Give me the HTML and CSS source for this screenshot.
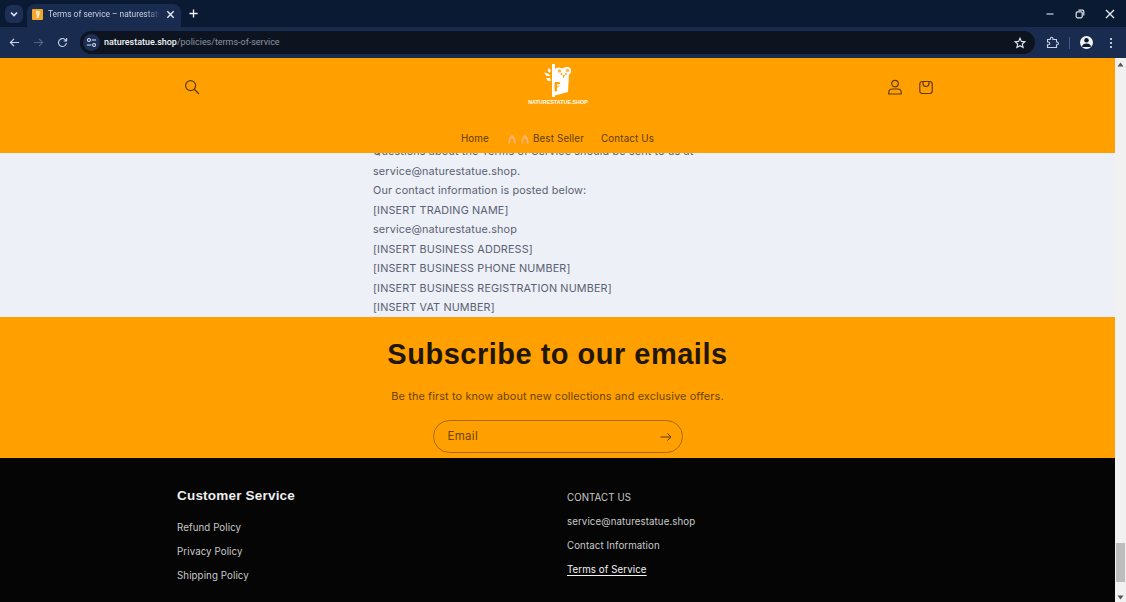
FILE: index.html
```html
<!DOCTYPE html>
<html lang="en">
<head>
<meta charset="utf-8">
<title>Terms of service – naturestatue.shop</title>
<link rel="stylesheet" href="styles.css">
</head>
<body>
<div class="browser">
  <div class="tabbar">
    <div class="tab-menu"><svg width="10" height="10" viewBox="0 0 10 10"><path d="M2 3.500 5 6.500 8 3.500" fill="none" stroke="#dfe6f5" stroke-width="1.600"/></svg></div>
    <div class="tab">
      <svg class="favicon" width="11" height="11" viewBox="0 0 11 11"><rect width="11" height="11" rx="1" fill="#f4a72c"/><path d="M4 2H7.500V5.500L6.500 9H4.500L5 5.500H4Z" fill="#ffe9b8"/></svg>
      <span class="tab-title">Terms of service – naturestatue.shop</span>
      <svg class="tab-close" width="9" height="9" viewBox="0 0 10 10"><path d="M1.500 1.500 8.500 8.500M8.500 1.500 1.500 8.500" stroke="#e8edf7" stroke-width="1.500"/></svg>
    </div>
    <svg class="new-tab" width="9" height="9" viewBox="0 0 10 10"><path d="M5 .5V9.500M.5 5H9.500" stroke="#eef2fa" stroke-width="1.500"/></svg>
    <div class="win-controls">
      <svg width="10" height="10" viewBox="0 0 10 10"><path d="M1.500 5H8.500" stroke="#dfe4ee" stroke-width="1.100"/></svg>
      <svg width="10" height="10" viewBox="0 0 10 10"><rect x="1.200" y="2.800" width="6" height="6" rx="1.200" fill="none" stroke="#dfe4ee" stroke-width="1.200"/><path d="M3.400 1.200H7.600A1.200 1.200 0 0 1 8.800 2.400V6.600" fill="none" stroke="#dfe4ee" stroke-width="1.200"/></svg>
      <svg width="10" height="10" viewBox="0 0 10 10"><path d="M1 1 9 9M9 1 1 9" stroke="#e8ecf4" stroke-width="1.300"/></svg>
    </div>
  </div>
  <div class="toolbar">
    <svg class="nav-icon" width="11" height="11" viewBox="0 0 12 12"><path d="M11 6H1.500M5.500 2 1.500 6 5.500 10" fill="none" stroke="#c9d3e8" stroke-width="1.300"/></svg>
    <svg class="nav-icon" width="11" height="11" viewBox="0 0 12 12"><path d="M1 6H10.500M6.500 2 10.500 6 6.500 10" fill="none" stroke="#56627c" stroke-width="1.300"/></svg>
    <svg class="nav-icon" width="11" height="11" viewBox="0 0 12 12"><path d="M10.200 6.500A4.300 4.300 0 1 1 8.900 2.900L10.500 4.400M10.500 1.200V4.400H7.300" fill="none" stroke="#c9d3e8" stroke-width="1.200"/></svg>
    <div class="omnibox">
      <span class="site-chip"><svg width="11" height="11" viewBox="0 0 12 12"><circle cx="3.200" cy="3.300" r="1.600" fill="none" stroke="#dfe6f5" stroke-width="1.100"/><path d="M6.200 3.300H11M1 8.700H5.800" stroke="#dfe6f5" stroke-width="1.100"/><circle cx="8.800" cy="8.700" r="1.600" fill="none" stroke="#dfe6f5" stroke-width="1.100"/></svg></span>
      <span class="url"><span class="url-host">naturestatue.shop</span>/policies/terms-of-service</span>
      <svg class="star" width="12" height="12" viewBox="0 0 12 12"><path d="M6 1.200 7.400 4.400 10.900 4.700 8.300 7 9.100 10.500 6 8.700 2.900 10.500 3.700 7 1.100 4.700 4.600 4.400Z" fill="none" stroke="#e6ebf5" stroke-width="1.100"/></svg>
    </div>
    <svg class="ext" width="13" height="13" viewBox="0 0 13 13"><path d="M1.500 3.500H4.300V2.600A1.300 1.300 0 0 1 6.900 2.600V3.500H10.500V6H11A1.400 1.400 0 0 1 11 8.800H10.500V11.500H1.500V8.800H2.400A1.400 1.400 0 0 0 2.400 6H1.500Z" fill="none" stroke="#c9d3e8" stroke-width="1.100"/></svg>
    <span class="tool-sep"></span>
    <span class="avatar"><svg width="11" height="11" viewBox="0 0 12 12"><circle cx="6" cy="3.600" r="2.500" fill="#0d1a36"/><path d="M1.200 11A4.800 3.900 0 0 1 10.800 11Z" fill="#0d1a36"/></svg></span>
    <svg class="kebab" width="4" height="12" viewBox="0 0 4 12"><circle cx="2" cy="2" r="1.100" fill="#dfe6f5"/><circle cx="2" cy="6" r="1.100" fill="#dfe6f5"/><circle cx="2" cy="10" r="1.100" fill="#dfe6f5"/></svg>
  </div>
</div>
<div class="viewport">
  <div class="page">
    <header class="site-header">
      <div class="header-top">
        <svg class="icon-search" width="16" height="16" viewBox="0 0 16 16"><circle cx="6.600" cy="6.600" r="5" fill="none" stroke="#5c3d05" stroke-width="1.200"/><path d="M10.300 10.300 15 15" stroke="#5c3d05" stroke-width="1.300"/></svg>
        <div class="logo">
          <svg width="28" height="33" viewBox="0 0 28 33">
            <path d="M8 0H11V5C12 4.500 13 3.500 14.500 3.500C16.500 3.500 17 4.500 18 4.500C19 4.500 20 3 23 3C26 3 27.500 5 27 7.500C26.800 9 26 10 25 10.500L24 28 11 31.500V33H8Z" fill="#fff"/>
            <circle cx="15.500" cy="7" r="1.800" fill="#ffb84d"/>
            <circle cx="23.500" cy="6.500" r="1.800" fill="#ffb84d"/>
            <circle cx="17.500" cy="10" r=".9" fill="#ff9f00"/>
            <circle cx="22" cy="10" r=".9" fill="#ff9f00"/>
            <path d="M18.700 11H20.800L19.700 14.500Z" fill="#ff9f00"/>
            <path d="M11 18.500H15C16 18.500 16 20 15 20H12.500V27H11ZM12 23.500 15.500 22" stroke="#ff9f00" stroke-width=".9" fill="#ff9f00"/>
            <path d="M5 4 7 6.500 5.500 9 3.500 6.500ZM0 8.500 4 9.500 6.500 12 2.500 12ZM2 14 6 14 7 17 4 17Z" fill="#fff"/>
          </svg>
          <span class="logo-text">NATURESTATUE.SHOP</span>
        </div>
        <div class="header-icons">
          <svg width="16" height="16" viewBox="0 0 16 16"><circle cx="8" cy="4.600" r="3.300" fill="none" stroke="#5c3d05" stroke-width="1.200"/><path d="M1.800 15V13.200C1.800 11 3.500 10 5.500 10H10.500C12.500 10 14.200 11 14.200 13.200V15Z" fill="none" stroke="#5c3d05" stroke-width="1.200"/></svg>
          <svg width="16" height="16" viewBox="0 0 16 16"><rect x="1.800" y="2.500" width="12.400" height="12" rx="2.500" fill="none" stroke="#5c3d05" stroke-width="1.200"/><path d="M5 2.500V4.500A3 3 0 0 0 11 4.500V2.500" fill="none" stroke="#5c3d05" stroke-width="1.200"/></svg>
        </div>
      </div>
      <nav class="header-nav">
        <a class="nav-link">Home</a>
        <a class="nav-link nav-best">
          <svg class="flame" width="8" height="10" viewBox="0 0 9 11"><path d="M4.500 .5C6.800 3 8.500 5.500 8.500 8V10.500H6.500V8C6.500 6.500 5.500 5 4.500 4.500C3.500 5 2.500 6.500 2.500 8V10.500H.5V8C.5 5.500 2.200 3 4.500 .5Z" fill="#ffb27a"/></svg>
          <svg class="flame" width="8" height="10" viewBox="0 0 9 11"><path d="M4.500 .5C6.800 3 8.500 5.500 8.500 8V10.500H6.500V8C6.500 6.500 5.500 5 4.500 4.500C3.500 5 2.500 6.500 2.500 8V10.500H.5V8C.5 5.500 2.200 3 4.500 .5Z" fill="#ffb27a"/></svg>
          <span class="nav-best-label">Best Seller</span>
        </a>
        <a class="nav-link">Contact Us</a>
      </nav>
    </header>
    <main class="policy">
      <div class="policy-text">
        <p>Questions about the Terms of Service should be sent to us at</p>
        <p>service@naturestatue.shop.</p>
        <p>Our contact information is posted below:</p>
        <p>[INSERT TRADING NAME]</p>
        <p>service@naturestatue.shop</p>
        <p>[INSERT BUSINESS ADDRESS]</p>
        <p>[INSERT BUSINESS PHONE NUMBER]</p>
        <p>[INSERT BUSINESS REGISTRATION NUMBER]</p>
        <p>[INSERT VAT NUMBER]</p>
      </div>
    </main>
    <section class="subscribe">
      <h2 class="subscribe-title">Subscribe to our emails</h2>
      <p class="subscribe-sub">Be the first to know about new collections and exclusive offers.</p>
      <div class="email-field">
        <span class="email-label">Email</span>
        <svg width="12" height="10" viewBox="0 0 12 10"><path d="M.5 5H11M7.500 1.500 11 5 7.500 8.500" fill="none" stroke="#5c3d05" stroke-width="1"/></svg>
      </div>
    </section>
    <footer class="site-footer">
      <div class="footer-col">
        <h3 class="footer-heading">Customer Service</h3>
        <a class="footer-link">Refund Policy</a>
        <a class="footer-link">Privacy Policy</a>
        <a class="footer-link">Shipping Policy</a>
      </div>
      <div class="footer-col footer-col-right">
        <a class="footer-link">CONTACT US</a>
        <a class="footer-link">service@naturestatue.shop</a>
        <a class="footer-link">Contact Information</a>
        <a class="footer-link footer-current">Terms of Service</a>
      </div>
    </footer>
  </div>
  <div class="scrollbar">
    <svg width="7" height="5" viewBox="0 0 7 5"><path d="M3.500 .5 6.500 4.500H.5Z" fill="#555"/></svg>
    <div class="scroll-track"><div class="scroll-thumb"></div></div>
    <svg width="7" height="5" viewBox="0 0 7 5"><path d="M.5 .5H6.500L3.500 4.500Z" fill="#555"/></svg>
  </div>
</div>
</body>
</html>
```
FILE: styles.css
```css
* { box-sizing: border-box; }
html, body { margin: 0; padding: 0; height: 602px; overflow: hidden; }
body { font-family: "Inter", "Liberation Sans", sans-serif; background: #000; }
p, h2, h3 { margin: 0; }

.browser { height: 58px; font-family: "Roboto", "Liberation Sans", sans-serif; }
.tabbar { height: 27px; background: #0b1a33; display: flex; align-items: center; padding: 0 0 0 5px; }
.tab-menu { width: 18px; height: 18px; border-radius: 6px; background: #1d2f55; display: flex; align-items: center; justify-content: center; }
.tab { width: 154px; height: 23px; margin: 4px 0 0 4px; background: #1a2b50; border-radius: 8px 8px 0 0; display: flex; align-items: center; padding: 0 5px 3px 5px; }
.favicon { flex: none; }
.tab-title { margin-left: 5px; width: 112px; font-size: 8.400px; color: #c8d0e0; white-space: nowrap; overflow: hidden; flex: none; -webkit-mask-image: linear-gradient(to right, #000 88%, transparent); mask-image: linear-gradient(to right, #000 88%, transparent); }
.tab-close { margin-left: 6px; flex: none; }
.new-tab { margin-left: 8px; margin-top: -1px; }
.win-controls { margin-left: auto; display: flex; gap: 20px; padding-right: 11px; }
.toolbar { height: 31px; background: #1a2b50; display: flex; align-items: center; padding: 0 9px; }
.nav-icon { margin-right: 13px; flex: none; }
.nav-icon:nth-child(3) { margin-right: 12px; }
.omnibox { width: 955px; height: 23px; background: #0d1420; border-radius: 12px; display: flex; align-items: center; padding: 0 9px 0 3px; flex: none; }
.site-chip { width: 17px; height: 17px; border-radius: 9px; background: #1d2f55; display: flex; align-items: center; justify-content: center; flex: none; }
.url { margin-left: 4px; padding-bottom: 2px; font-size: 8.950px; color: #8b94a6; white-space: nowrap; }
.url-host { color: #f2f4f8; font-weight: 500; }
.star { margin-left: auto; }
.ext { margin-left: 11px; flex: none; }
.tool-sep { width: 1px; height: 12px; background: #4b5b80; margin: 0 10px 0 10px; flex: none; }
.avatar { width: 13px; height: 13px; border-radius: 7px; background: #f2f4f8; display: flex; align-items: center; justify-content: center; overflow: hidden; flex: none; }
.kebab { margin-left: 16px; flex: none; }

.viewport { height: 544px; display: flex; overflow: hidden; }
.page { width: 1115px; flex: none; display: flex; flex-direction: column; }

.site-header { height: 95px; background: #ff9f00; display: flex; flex-direction: column; flex: none; position: relative; z-index: 1; }
.header-top { height: 65px; padding: 0 181px 0 184px; display: flex; align-items: flex-start; justify-content: space-between; position: relative; }
.icon-search { margin-top: 21px; }
.logo { position: absolute; left: 528px; top: 6px; width: 60px; display: flex; flex-direction: column; align-items: center; }
.logo-text { font-size: 5.400px; font-weight: 700; color: #fff; margin-top: 2px; white-space: nowrap; font-family: "Liberation Sans", sans-serif; }
.header-icons { margin-top: 21px; display: flex; gap: 15px; }
.header-nav { display: flex; justify-content: center; gap: 17px; padding: 9px 0 0 0; }
.nav-link { font-size: 9.800px; letter-spacing: .15px; color: #5c3d05; line-height: 14px; white-space: nowrap; }
.nav-best { display: flex; align-items: center; }
.flame { margin-left: 2px; margin-right: 3px; flex: none; }
.nav-best-label { margin-left: 1px; }

.policy { height: 164px; background: #edf0f7; overflow: hidden; flex: none; padding-left: 373px; }
.policy-text { margin-top: -11px; font-size: 10.800px; line-height: 19.500px; letter-spacing: .15px; color: #5a5f72; white-space: nowrap; }

.subscribe { height: 141px; background: #ff9f00; display: flex; flex-direction: column; align-items: center; flex: none; }
.subscribe-title { margin-top: 19px; font-family: "Liberation Sans", sans-serif; font-size: 29px; line-height: 36px; font-weight: 700; letter-spacing: .5px; color: #1f1606; }
.subscribe-sub { margin-top: 15px; font-size: 10.900px; line-height: 18px; letter-spacing: .12px; color: #6a4505; }
.email-field { margin-top: 15px; width: 250px; height: 33px; border: 1px solid #a8690a; border-radius: 17px; display: flex; align-items: center; justify-content: space-between; padding: 0 10px 0 14px; }
.email-label { font-size: 11.500px; letter-spacing: .3px; color: #6a4505; position: relative; top: -1px; }

.site-footer { flex: 1; background: #050505; display: flex; padding: 29px 0 0 177px; }
.footer-col { width: 390px; display: flex; flex-direction: column; align-items: flex-start; }
.footer-heading { font-family: "Liberation Sans", sans-serif; font-size: 13.500px; line-height: 17px; font-weight: 700; letter-spacing: .2px; color: #eeeeee; margin-bottom: 17px; }
.footer-link { font-size: 9.700px; line-height: 14px; letter-spacing: .1px; color: #c9c9c9; margin-bottom: 10px; white-space: nowrap; }
.footer-col-right { padding-top: 4px; }
.footer-current { color: #f2f2f2; text-decoration: underline; text-underline-offset: 2px; }

.scrollbar { flex: 1; background: #f1f1f1; display: flex; flex-direction: column; align-items: center; padding: 4px 0 2px; gap: 2px; }
.scroll-track { flex: 1; width: 100%; display: flex; flex-direction: column; justify-content: flex-end; padding-bottom: 11px; }
.scroll-thumb { height: 39px; background: #bdbdbd; margin: 0 1px; }
```
